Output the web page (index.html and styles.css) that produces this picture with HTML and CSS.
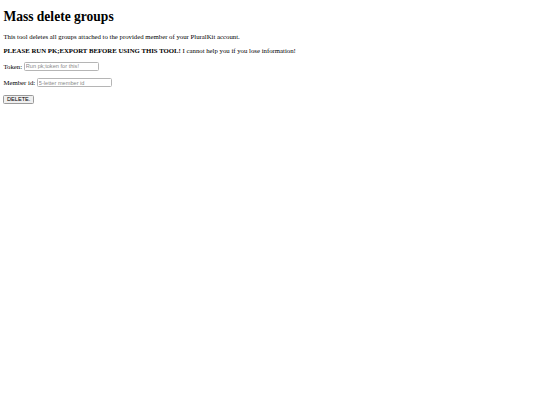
FILE: index.html
```html
<!DOCTYPE html>
<html lang="en">
<head>
<meta charset="utf-8">
<title>Mass delete groups</title>
<link rel="stylesheet" href="styles.css">
</head>
<body>
<main class="page">
  <h1 class="title">Mass delete groups</h1>
  <p class="intro">This tool deletes all groups attached to the provided member of your PluralKit account.</p>
  <p class="warning"><strong>PLEASE RUN PK;EXPORT BEFORE USING THIS TOOL!</strong> I cannot help you if you lose information!</p>
  <p class="field"><label for="token">Token:</label> <input id="token" class="text-input" type="text" placeholder="Run pk;token for this!"></p>
  <p class="field"><label for="member">Member id:</label> <input id="member" class="text-input" type="text" placeholder="5-letter member id"></p>
  <button class="delete-btn" type="button">DELETE.</button>
</main>
</body>
</html>
```

FILE: styles.css
```css
html {
  background: #fff;
}
body {
  margin: 3.4px;
  font-family: "Liberation Serif", "Times New Roman", serif;
  font-size: 6.77px;
  color: #000;
}
.title {
  font-size: 13.54px;
  font-weight: bold;
  margin: 6px 0 7px;
}
.intro, .warning, .field {
  margin: 7.5px 0;
}
.text-input {
  box-sizing: border-box;
  width: 75px;
  height: 9px;
  padding: 0 1px;
  font-family: "Liberation Sans", Arial, sans-serif;
  font-size: 5.64px;
  color: #000;
  background: #fff;
  border: 1px solid #b5b5b5;
  border-radius: 1.5px;
  vertical-align: baseline;
  outline: none;
}
.text-input::placeholder {
  color: #8a8a8a;
}
.delete-btn {
  box-sizing: border-box;
  height: 9px;
  padding: 0 2.6px;
  font-family: "Liberation Sans", Arial, sans-serif;
  font-size: 5.64px;
  color: #000;
  background: #efefef;
  border: 1px solid #9a9a9a;
  border-radius: 1.5px;
  line-height: 1;
}
```
